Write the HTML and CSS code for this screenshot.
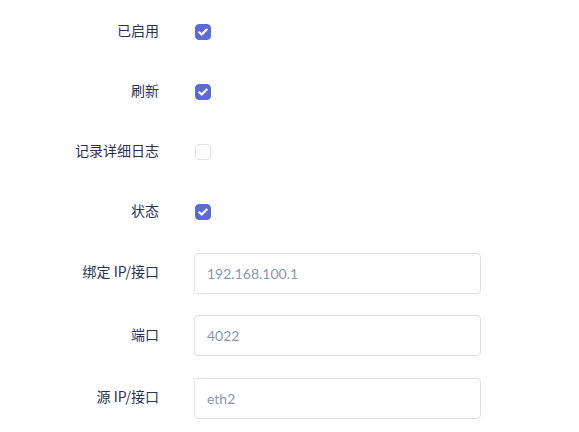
FILE: index.html
```html
<!DOCTYPE html>
<html lang="zh-CN">
<head>
<meta charset="utf-8">
<title>设置</title>
<link rel="stylesheet" href="styles.css">
</head>
<body>
<form class="form">
  <div class="row row-check">
    <label class="label">已启用</label>
    <span class="check on"><svg viewBox="0 0 16 16" width="16" height="16"><path d="M4.3 8.2 L6.8 10.6 L11.7 5.6" fill="none" stroke="#fff" stroke-width="2.2" stroke-linecap="round" stroke-linejoin="round"/></svg></span>
  </div>
  <div class="row row-check">
    <label class="label">刷新</label>
    <span class="check on"><svg viewBox="0 0 16 16" width="16" height="16"><path d="M4.3 8.2 L6.8 10.6 L11.7 5.6" fill="none" stroke="#fff" stroke-width="2.2" stroke-linecap="round" stroke-linejoin="round"/></svg></span>
  </div>
  <div class="row row-check">
    <label class="label">记录详细日志</label>
    <span class="check"></span>
  </div>
  <div class="row row-check">
    <label class="label">状态</label>
    <span class="check on"><svg viewBox="0 0 16 16" width="16" height="16"><path d="M4.3 8.2 L6.8 10.6 L11.7 5.6" fill="none" stroke="#fff" stroke-width="2.2" stroke-linecap="round" stroke-linejoin="round"/></svg></span>
  </div>
  <div class="row">
    <label class="label">绑定 IP/接口</label>
    <input class="input" type="text" placeholder="192.168.100.1">
  </div>
  <div class="row">
    <label class="label">端口</label>
    <input class="input" type="text" placeholder="4022">
  </div>
  <div class="row">
    <label class="label">源 IP/接口</label>
    <input class="input" type="text" placeholder="eth2">
  </div>
</form>
</body>
</html>
```
FILE: styles.css
```css
* { box-sizing: border-box; }
html, body { margin: 0; padding: 0; background: #fff; }
body {
  font-family: Lato, "Noto Sans CJK SC", sans-serif;
  font-size: 14px;
  color: #2c3150;
}
.form {
  display: flex;
  flex-direction: column;
  gap: 21.5px;
  padding-top: 12.75px;
}
.row {
  display: grid;
  grid-template-columns: 159px 287px;
  column-gap: 35px;
  align-items: center;
  height: 41px;
}
.row-check { height: 38.5px; }
.label {
  text-align: right;
  white-space: nowrap;
  line-height: 20px;
  padding-bottom: 4px;
  font-family: "Noto Sans CJK SC", sans-serif;
}
.check {
  width: 16px;
  height: 16px;
  border-radius: 4px;
  border: 1px solid #dcdfe6;
  background: #fff;
  display: flex;
  align-items: center;
  justify-content: center;
  margin-left: 1px;
}
.check.on {
  background: #5e6ad9;
  border-color: #5e6ad9;
}
.check svg { display: block; flex: none; }
.input {
  width: 287px;
  height: 41px;
  border: 1px solid #dcdfe6;
  border-radius: 4px;
  padding: 0 12px;
  font-family: Lato, "Noto Sans CJK SC", sans-serif;
  font-size: 14px;
  color: #2c3150;
  background: #fff;
  outline: none;
}
.input::placeholder { color: #8e96a7; }
```
